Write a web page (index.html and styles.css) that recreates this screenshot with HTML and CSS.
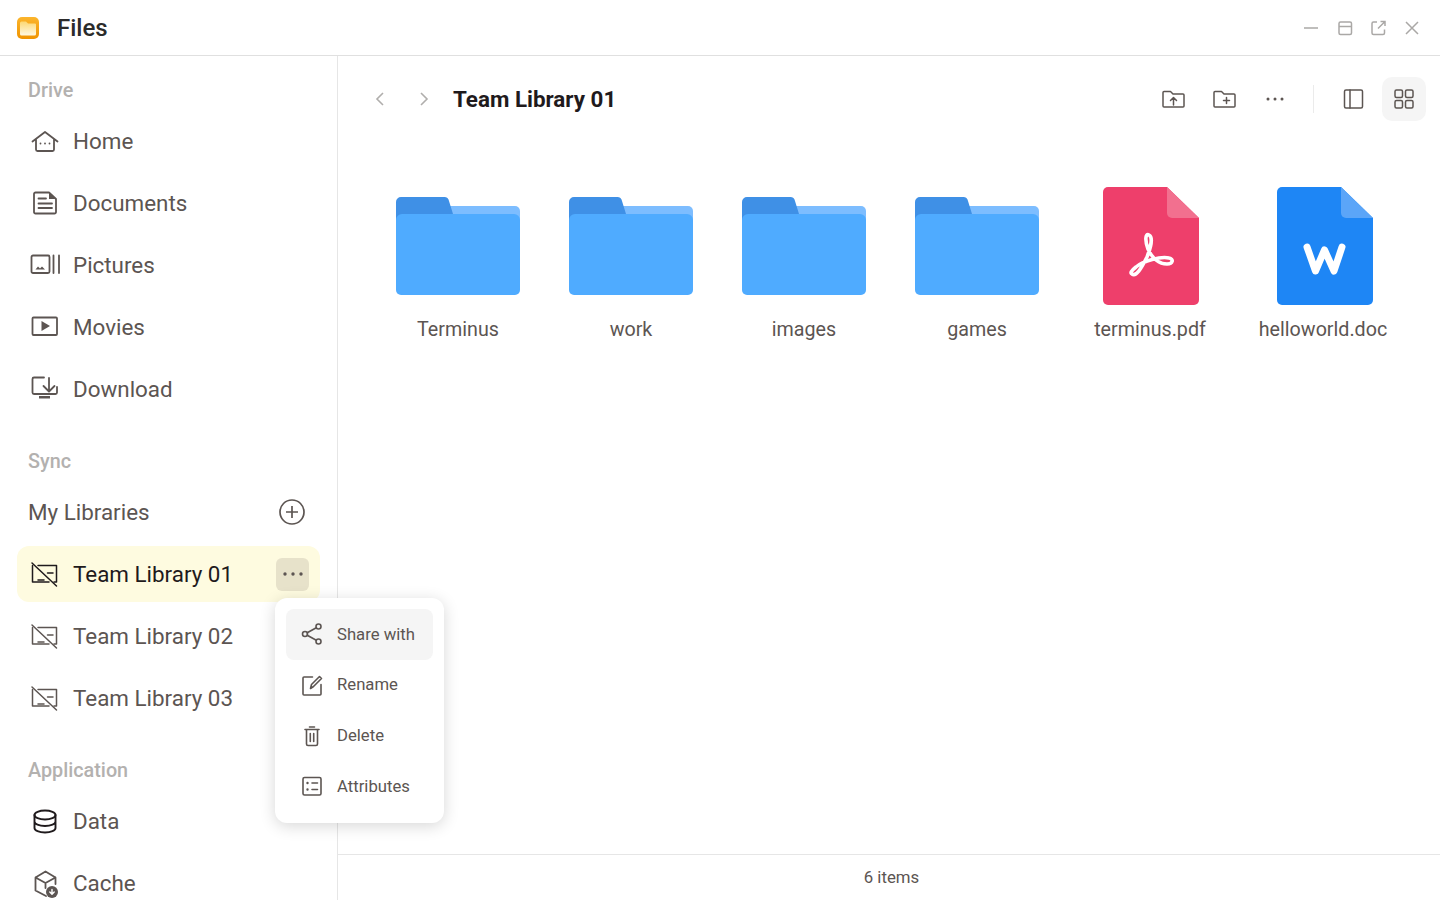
FILE: index.html
```html
<!DOCTYPE html>
<html lang="en">
<head>
  <meta charset="UTF-8">
  <meta name="viewport" content="width=device-width, initial-scale=1.0">
  <title>Files</title>
  <link rel="stylesheet" href="styles.css">
</head>
<body>
  <header class="titlebar">
    <svg class="app-logo" width="24" height="24" viewBox="0 0 24 24">
      <defs>
        <linearGradient id="logo-edge" x1="0" y1="0" x2="0" y2="1"><stop offset="0" stop-color="#fbb52c"/><stop offset="1" stop-color="#f09400"/></linearGradient>
        <linearGradient id="logo-fill" x1="0" y1="0" x2="0" y2="1"><stop offset="0" stop-color="#fcd873"/><stop offset="1" stop-color="#fff8e2"/></linearGradient>
      </defs>
      <rect x="1" y="1" width="22" height="22" rx="5" fill="url(#logo-edge)"/>
      <path d="M4 7 a1.500 1.500 0 0 1 1.500-1.500 H10 L12 7.500 H19 a1 1 0 0 1 1 1 V18 a1.500 1.500 0 0 1-1.500 1.500 H5.500 A1.500 1.500 0 0 1 4 18 Z" fill="url(#logo-fill)"/>
    </svg>
    <span class="app-name">Files</span>
    <div class="window-controls">
      <svg width="24" height="24" viewBox="0 0 24 24"><path d="M5 12 H19"/></svg>
      <svg width="24" height="24" viewBox="0 0 24 24"><rect x="6" y="6" width="12.500" height="12.500" rx="1.500"/><path d="M6 10.500 H18.500"/></svg>
      <svg width="24" height="24" viewBox="0 0 24 24"><path d="M11 6 H7.500 A1.500 1.500 0 0 0 6 7.500 V17 A1.500 1.500 0 0 0 7.500 18.500 H17 A1.500 1.500 0 0 0 18.500 17 V13.500 M12 12.500 L19 5.500 M14.500 5.500 H19 V10"/></svg>
      <svg width="24" height="24" viewBox="0 0 24 24"><path d="M6 6 L18 18 M18 6 L6 18"/></svg>
    </div>
  </header>

  <div class="layout">
    <aside class="sidebar">
      <section class="side-section">
        <h3 class="side-label">Drive</h3>
        <a class="side-item">
          <svg class="side-icon" viewBox="0 0 34 34"><path d="M4.500 17.500 L17 8 L29.500 17.500 M8 15.500 V25.500 A1.500 1.500 0 0 0 9.500 27 H24.500 A1.500 1.500 0 0 0 26 25.500 V15.500"/><path class="dots" d="M12.500 19.500 h.01 M17 19.500 h.01 M21.500 19.500 h.01"/></svg>
          <span>Home</span>
        </a>
        <a class="side-item">
          <svg class="side-icon" viewBox="0 0 34 34"><path d="M7.500 6.500 H21 L28 13 V26 A1.500 1.500 0 0 1 26.500 27.500 H7.500 A1.500 1.500 0 0 1 6 26 V8 A1.500 1.500 0 0 1 7.500 6.500 Z"/><path d="M10.500 12.500 H18 M10.500 17.500 H24 M10.500 22 H24"/><path class="solid" d="M21 6.500 L28 13 H21 Z"/></svg>
          <span>Documents</span>
        </a>
        <a class="side-item">
          <svg class="side-icon" viewBox="0 0 34 34"><rect x="3.500" y="7.500" width="18" height="17.500" rx="1.500"/><path d="M25.500 7.500 V25 M31 7.500 V25"/><path class="solid" d="M7.500 21.500 L10 18.500 L12 20.500 L14 18.500 L17 21.500 Z"/></svg>
          <span>Pictures</span>
        </a>
        <a class="side-item">
          <svg class="side-icon" viewBox="0 0 34 34"><rect x="4.500" y="7.500" width="24.500" height="17.500" rx="1"/><path class="solid" d="M13.500 11 L22 16 L13.500 21 Z"/></svg>
          <span>Movies</span>
        </a>
        <a class="side-item">
          <svg class="side-icon" viewBox="0 0 34 34"><path d="M16 5.500 H6 A1.500 1.500 0 0 0 4.500 7 V20.500 A1.500 1.500 0 0 0 6 22 H27.500 A1.500 1.500 0 0 0 29 20.500 V15"/><path d="M21 6 V19 M15.500 14 L21 19.500 L26.500 14"/><path class="solid" d="M11 24 H22 V26.500 H11 Z"/></svg>
          <span>Download</span>
        </a>
      </section>

      <section class="side-section">
        <h3 class="side-label">Sync</h3>
        <div class="side-group">
          <span>My Libraries</span>
          <svg class="plus-icon" width="28" height="28" viewBox="0 0 28 28"><circle cx="14" cy="14" r="12"/><path d="M14 8 V20 M8 14 H20"/></svg>
        </div>
        <a class="side-item active">
          <svg class="side-icon library" viewBox="0 0 34 34"><path d="M10 8.500 H28.500 V25 H26 M21 25 H4.500 V8.500"/><path d="M4 6 L28.500 29 M19.500 16 H25 M10 23 H16"/></svg>
          <span>Team Library 01</span>
          <button class="more-btn">
            <svg width="22" height="22" viewBox="0 0 22 22"><path class="dots" d="M3 11 h.01 M11 11 h.01 M19 11 h.01"/></svg>
          </button>
        </a>
        <a class="side-item">
          <svg class="side-icon library" viewBox="0 0 34 34"><path d="M10 8.500 H28.500 V25 H26 M21 25 H4.500 V8.500"/><path d="M4 6 L28.500 29 M19.500 16 H25 M10 23 H16"/></svg>
          <span>Team Library 02</span>
        </a>
        <a class="side-item">
          <svg class="side-icon library" viewBox="0 0 34 34"><path d="M10 8.500 H28.500 V25 H26 M21 25 H4.500 V8.500"/><path d="M4 6 L28.500 29 M19.500 16 H25 M10 23 H16"/></svg>
          <span>Team Library 03</span>
        </a>
      </section>

      <section class="side-section">
        <h3 class="side-label">Application</h3>
        <a class="side-item">
          <svg class="side-icon dark" viewBox="0 0 34 34"><ellipse cx="17" cy="11" rx="10.500" ry="4.500"/><path d="M6.500 11 V24 C6.500 26.500 11 28.500 17 28.500 C23 28.500 27.500 26.500 27.500 24 V11 M6.500 17.500 C6.500 20 11 22 17 22 C23 22 27.500 20 27.500 17.500"/></svg>
          <span>Data</span>
        </a>
        <a class="side-item">
          <svg class="side-icon" viewBox="0 0 34 34"><path d="M18 30 L7.500 24.500 V11.500 L17.500 5.500 L27.500 11.500 V18 M7.500 11.500 L17.500 17 L27.500 11.500 M17.500 17 V22"/><circle class="solid" cx="24" cy="26" r="6"/><path class="badge-arrow" d="M24 23.500 V28 M21.800 26 L24 28.200 L26.200 26"/></svg>
          <span>Cache</span>
        </a>
      </section>
    </aside>

    <main class="content">
      <div class="toolbar">
        <svg class="chevron" width="24" height="24" viewBox="0 0 24 24"><path d="M15 6 L9 12 L15 18"/></svg>
        <svg class="chevron" width="24" height="24" viewBox="0 0 24 24"><path d="M9 6 L15 12 L9 18"/></svg>
        <h1 class="page-title">Team Library 01</h1>
        <div class="tools">
          <svg class="tool-icon" viewBox="0 0 28 28"><path d="M4 7.500 A1 1 0 0 1 5 6.500 H11.500 L14 9 H24 A1 1 0 0 1 25 10 V21 A1 1 0 0 1 24 22 H5 A1 1 0 0 1 4 21 Z M14.500 20 V12.500 M11.500 15.500 L14.500 12.500 L17.500 15.500"/></svg>
          <svg class="tool-icon" viewBox="0 0 28 28"><path d="M4 7.500 A1 1 0 0 1 5 6.500 H11.500 L14 9 H24 A1 1 0 0 1 25 10 V21 A1 1 0 0 1 24 22 H5 A1 1 0 0 1 4 21 Z M16.500 12.500 V18.500 M13.500 15.500 H19.500"/></svg>
          <svg class="tool-icon" viewBox="0 0 28 28"><path class="dots" d="M7 14 h.01 M14 14 h.01 M21 14 h.01"/></svg>
          <span class="tool-divider"></span>
          <svg class="tool-icon panel" viewBox="0 0 28 28"><rect x="4.500" y="5" width="18" height="18" rx="1.500"/><path d="M10 5 V23"/></svg>
          <span class="view-btn">
            <svg class="tool-icon" viewBox="0 0 28 28"><rect x="5" y="5" width="7.500" height="7.500" rx="1.500"/><rect x="15.500" y="5" width="7.500" height="7.500" rx="1.500"/><rect x="5" y="15.500" width="7.500" height="7.500" rx="1.500"/><rect x="15.500" y="15.500" width="7.500" height="7.500" rx="1.500"/></svg>
          </span>
        </div>
      </div>

      <div class="file-grid">
        <div class="file">
          <div class="file-thumb">
            <svg class="folder" width="124" height="98" viewBox="0 0 124 98"><use href="#folder-shape"/></svg>
          </div>
          <span>Terminus</span>
        </div>
        <div class="file">
          <div class="file-thumb">
            <svg class="folder" width="124" height="98" viewBox="0 0 124 98"><use href="#folder-shape"/></svg>
          </div>
          <span>work</span>
        </div>
        <div class="file">
          <div class="file-thumb">
            <svg class="folder" width="124" height="98" viewBox="0 0 124 98"><use href="#folder-shape"/></svg>
          </div>
          <span>images</span>
        </div>
        <div class="file">
          <div class="file-thumb">
            <svg class="folder" width="124" height="98" viewBox="0 0 124 98"><use href="#folder-shape"/></svg>
          </div>
          <span>games</span>
        </div>
        <div class="file">
          <div class="file-thumb">
            <svg class="pdf-icon" width="96" height="118" viewBox="0 0 96 118">
              <path d="M5 0 H64 L96 31 V113 A5 5 0 0 1 91 118 H5 A5 5 0 0 1 0 113 V5 A5 5 0 0 1 5 0 Z" fill="#ee3f6b"/>
              <path d="M64 0 L96 31 H69 A5 5 0 0 1 64 26 Z" fill="#f2708f"/>
              <path d="M29 87 C33 90 38 82 44 70 C48 60 50 50 46 48 C42 46 42 54 45 62 C49 71 56 77 64 77 C70 77 71 72 66 71 C58 69 40 74 33 80 C28 84 27 86 29 87 Z" fill="none" stroke="#fff" stroke-width="3.600"/>
            </svg>
          </div>
          <span>terminus.pdf</span>
        </div>
        <div class="file">
          <div class="file-thumb">
            <svg class="doc-icon" width="96" height="118" viewBox="0 0 96 118">
              <path d="M5 0 H64 L96 31 V113 A5 5 0 0 1 91 118 H5 A5 5 0 0 1 0 113 V5 A5 5 0 0 1 5 0 Z" fill="#1e86f5"/>
              <path d="M64 0 L96 31 H69 A5 5 0 0 1 64 26 Z" fill="#5ba5f8"/>
              <path d="M30 60 L38.500 84 L47.500 63 L57 84 L65 60" fill="none" stroke="#fff" stroke-width="7" stroke-linecap="round" stroke-linejoin="round"/>
            </svg>
          </div>
          <span>helloworld.doc</span>
        </div>
      </div>

      <footer class="statusbar">6 items</footer>
    </main>
  </div>

  <div class="context-menu">
    <div class="menu-item selected">
      <svg class="menu-icon" viewBox="0 0 24 24"><circle cx="5" cy="12" r="2.500"/><circle cx="18.500" cy="4.500" r="2.500"/><circle cx="18.500" cy="19.500" r="2.500"/><path d="M7.200 10.800 L16.300 5.700 M7.200 13.200 L16.300 18.300"/></svg>
      <span>Share with</span>
    </div>
    <div class="menu-item">
      <svg class="menu-icon" viewBox="0 0 24 24"><path d="M12.500 4 H4 A1 1 0 0 0 3 5 V21 A1 1 0 0 0 4 22 H20 A1 1 0 0 0 21 21 V11.500 M10.500 15.500 L11.500 11.500 L19.500 3.500 L21.500 5.500 L13.500 13.500 Z"/></svg>
      <span>Rename</span>
    </div>
    <div class="menu-item">
      <svg class="menu-icon" viewBox="0 0 24 24"><path d="M5 5.500 H19 M9.500 3 H14.500 M6.500 5.500 V20 A1.500 1.500 0 0 0 8 21.500 H16 A1.500 1.500 0 0 0 17.500 20 V5.500 M10.300 9.500 V17.500 M13.700 9.500 V17.500"/></svg>
      <span>Delete</span>
    </div>
    <div class="menu-item">
      <svg class="menu-icon" viewBox="0 0 24 24"><rect x="3" y="3.500" width="18" height="17.500" rx="1.500"/><path d="M12 9 H17.500 M12 15.500 H17.500"/><path class="dots" d="M7.500 9 h.01 M7.500 15.500 h.01"/></svg>
      <span>Attributes</span>
    </div>
  </div>

  <svg class="defs" width="0" height="0">
    <defs>
      <g id="folder-shape">
        <path d="M50 9 H119 A5 5 0 0 1 124 14 V30 H50 Z" fill="#7dbdff"/>
        <path d="M5 0 H48 A5 5 0 0 1 53 4 L57 17 V30 H0 V5 A5 5 0 0 1 5 0 Z" fill="#3f90e6"/>
        <path d="M0 23 A6 6 0 0 1 6 17 H118 A6 6 0 0 1 124 23 V93 A5 5 0 0 1 119 98 H5 A5 5 0 0 1 0 93 Z" fill="#4fabff"/>
      </g>
    </defs>
  </svg>
</body>
</html>
```

FILE: styles.css
```css
* {
  box-sizing: border-box;
}

html,
body {
  height: 100%;
}

body {
  margin: 0;
  height: 100vh;
  overflow: hidden;
  display: flex;
  flex-direction: column;
  position: relative;
  background-color: #fff;
  color: #5c5552;
  font-family: Roboto, "Liberation Sans", sans-serif;
}

svg {
  display: block;
  flex: none;
}

.defs {
  position: absolute;
}

/* title bar */
.titlebar {
  flex: none;
  height: 56px;
  display: flex;
  align-items: center;
  padding: 0 16px;
  border-bottom: 1px solid #e0e0e0;
}

.app-name {
  margin-left: 17px;
  font-size: 24px;
  font-weight: 500;
  color: #2b2b2b;
}

.window-controls {
  margin-left: auto;
  display: flex;
  gap: 9.670px;
}

.window-controls svg {
  fill: none;
  stroke: #aaa8a6;
  stroke-width: 1.500;
}

/* layout */
.layout {
  flex: 1;
  min-height: 0;
  display: flex;
}

.sidebar {
  flex: none;
  width: 338px;
  height: 100%;
  overflow: hidden;
  padding: 22px 17px 0 17px;
  border-right: 1px solid #e6e6e6;
}

.side-section {
  display: flex;
  flex-direction: column;
  gap: 6px;
  margin-bottom: 32px;
}

.side-label {
  margin: 0 0 5px 11px;
  height: 24px;
  line-height: 26px;
  font-size: 19.800px;
  font-weight: 500;
  color: #b3b1af;
}

.side-item,
.side-group {
  flex: none;
  height: 56px;
  display: flex;
  align-items: center;
  padding: 0 11px;
  font-size: 22.400px;
  border-radius: 12px;
}

.side-icon {
  width: 34px;
  height: 34px;
  margin-right: 11px;
  fill: none;
  stroke: #5c5552;
  stroke-width: 1.800;
  stroke-linecap: round;
  stroke-linejoin: round;
}

.side-icon.library {
  stroke-width: 1.500;
}

.side-icon.dark {
  stroke: #1f1a1c;
  stroke-width: 1.900;
}

.dots {
  fill: none;
  stroke: currentColor;
  stroke-width: 3.400;
  stroke-linecap: round;
}

.side-icon .dots {
  stroke-width: 1.800;
}

.solid {
  fill: #5c5552;
  stroke: none;
}

.badge-arrow {
  stroke: #fff;
  stroke-width: 1.400;
}

.side-group {
  justify-content: space-between;
}

.plus-icon {
  margin-right: 3px;
  fill: none;
  stroke: #5c5552;
  stroke-width: 1.700;
}

.side-item.active {
  background-color: #fefbe0;
  color: #1f1a1c;
}

.side-item.active .side-icon {
  stroke: #1f1a1c;
}

.more-btn {
  margin-left: auto;
  width: 33px;
  height: 33px;
  padding: 0;
  display: flex;
  align-items: center;
  justify-content: center;
  border: none;
  border-radius: 6px;
  background-color: #e7e2ca;
  color: #5c5552;
}

/* content */
.content {
  flex: 1;
  min-width: 0;
  display: flex;
  flex-direction: column;
}

.toolbar {
  flex: none;
  height: 85px;
  display: flex;
  align-items: center;
  padding: 0 14px 0 30px;
}

.chevron {
  margin-right: 20px;
  fill: none;
  stroke: #b0aeac;
  stroke-width: 1.600;
}

.page-title {
  margin: 0 0 0 -3px;
  font-size: 22.400px;
  font-weight: 700;
  color: #1f1a1c;
}

.tools {
  margin-left: auto;
  display: flex;
  align-items: center;
}

.tool-icon {
  width: 28px;
  height: 28px;
  margin: 0 11.500px;
  fill: none;
  stroke: #5c5552;
  stroke-width: 1.500;
  color: #5c5552;
  stroke-linejoin: round;
  stroke-linecap: round;
}

.tool-icon .dots {
  stroke-width: 3;
}

.tool-divider {
  width: 1px;
  height: 28px;
  margin: 0 14px 0 13px;
  background-color: #ebebeb;
}

.tool-icon.panel {
  margin: 0 14px 0 12px;
}

.view-btn {
  width: 44px;
  height: 44px;
  display: flex;
  align-items: center;
  justify-content: center;
  border-radius: 10px;
  background-color: #f5f5f5;
}

.view-btn .tool-icon {
  margin: 0;
}

.file-grid {
  flex: 1;
  display: flex;
  align-items: flex-start;
  padding: 46px 0 0 33.500px;
}

.file {
  width: 173px;
  display: flex;
  flex-direction: column;
  align-items: center;
  font-size: 19.700px;
}

.file-thumb {
  height: 118px;
  margin-bottom: 13px;
  display: flex;
  align-items: flex-end;
  justify-content: center;
}

.folder {
  margin-bottom: 10px;
}

.pdf-icon {
  margin-left: 2px;
}

.doc-icon {
  margin-left: 4px;
}

.statusbar {
  flex: none;
  height: 46px;
  display: flex;
  align-items: center;
  justify-content: center;
  padding: 0 0 2px 5px;
  border-top: 1px solid #e6e6e6;
  font-size: 16.800px;
}

/* menu */
.context-menu {
  position: absolute;
  left: 275px;
  top: 598px;
  width: 169px;
  padding: 11px;
  border-radius: 12px;
  background-color: #fff;
  box-shadow: 0 3px 16px rgba(0, 0, 0, 0.16);
  font-size: 16.700px;
}

.menu-item {
  height: 50.670px;
  display: flex;
  align-items: center;
  padding-left: 14px;
  border-radius: 8px;
}

.menu-item.selected {
  background-color: #f5f5f5;
}

.menu-icon {
  width: 24px;
  height: 24px;
  margin-right: 13px;
  fill: none;
  stroke: #5c5552;
  stroke-width: 1.600;
  stroke-linejoin: round;
  stroke-linecap: round;
  color: #5c5552;
}

.menu-icon .dots {
  stroke-width: 2.400;
}
```
